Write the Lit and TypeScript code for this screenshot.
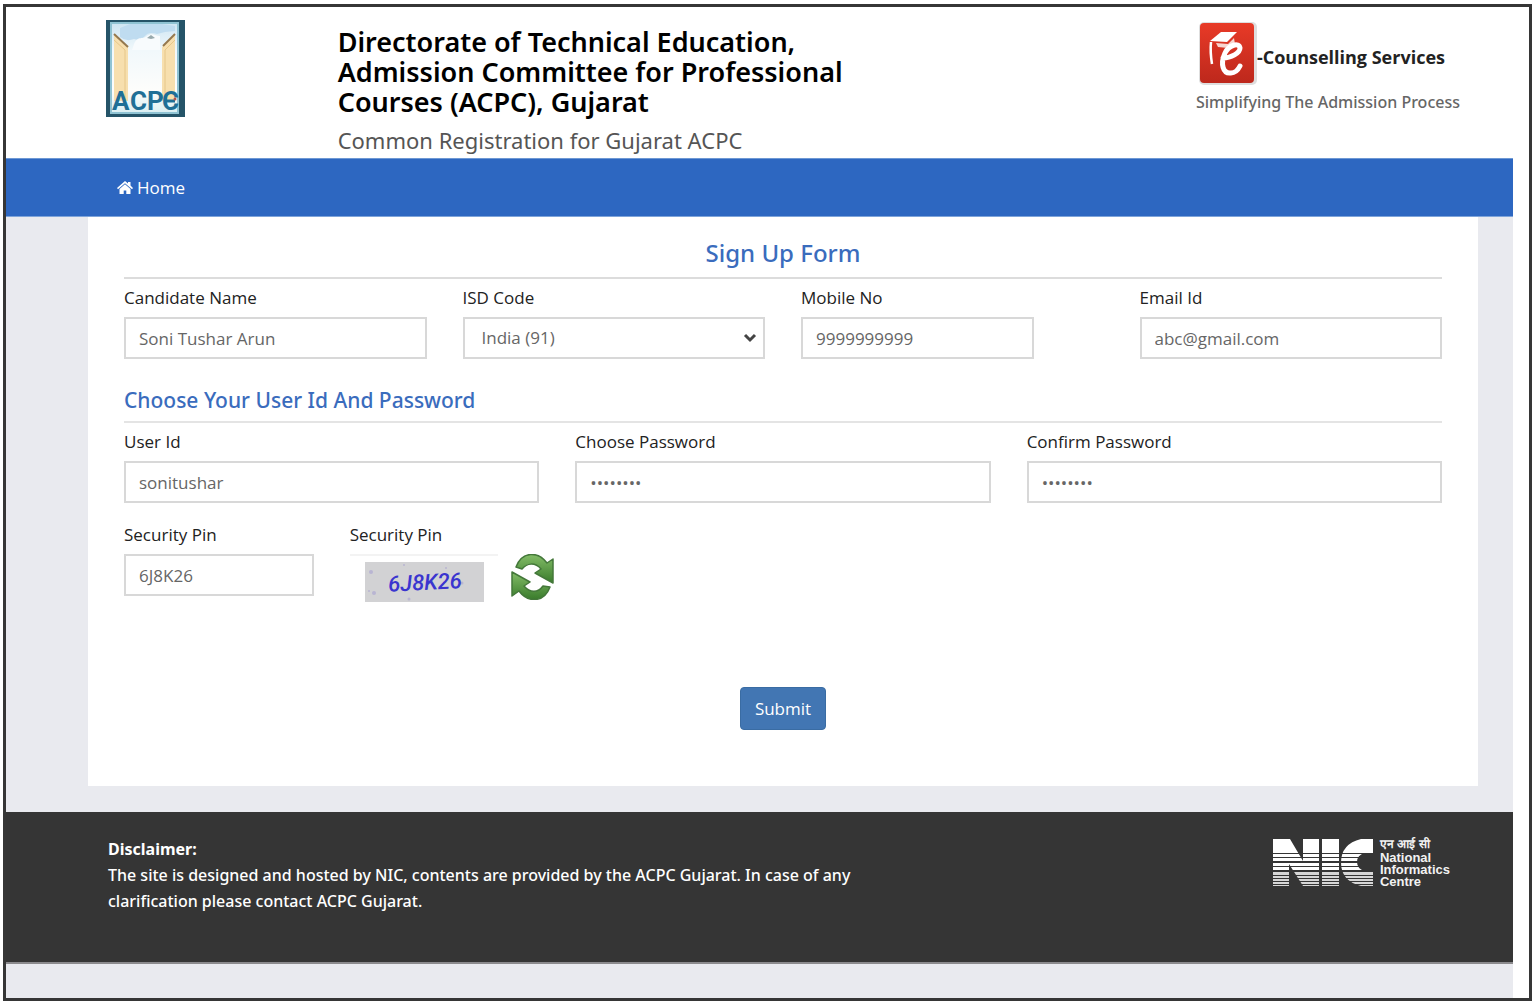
import { LitElement, html, css, svg } from "lit";
import { customElement } from "lit/decorators.js";

@customElement("acpc-logo")
class AcpcLogo extends LitElement {
  static styles = css`
    :host { display: block; }
    .art { display: block; width: 80px; height: 97px; }
    .name { font: 700 26px "Roboto", sans-serif; fill: #1f6f96; }
  `;
  render() {
    return html`<svg class="art" viewBox="0 0 80 97" role="img" aria-label="ACPC">
      <defs>
        <linearGradient id="sky" x1="0" y1="0" x2="0" y2="1">
          <stop offset="0" stop-color="#cfe6f3" />
          <stop offset=".3" stop-color="#f1f8fb" />
          <stop offset=".75" stop-color="#fdfdfb" />
          <stop offset="1" stop-color="#dcf0f3" />
        </linearGradient>
      </defs>
      <rect width="79" height="97" fill="#255468" />
      <rect x="4" y="2" width="69" height="92" fill="#8fc3d3" />
      <rect x="6" y="4" width="65" height="88" fill="url(#sky)" />
      <path d="M14 8l10-4h32l13 2v5l-10 1-8 2q-8-3-12 2t-11 3q-8 3-14-2z" fill="#bfdcf0" />
      <path d="M28 24c4-9 9-4 13-8 5-4 9 0 13 0v14H26z" fill="#f8fbfd" />
      <path d="M41 18l4-3 4 3-4 1z" fill="#98a9ad" />
      <path d="M8 14l14 13v54H8z" fill="#f7dfae" />
      <path d="M8 20l11 10v50" fill="none" stroke="#e6c78a" stroke-width="1" />
      <path d="M8 14l14 13" stroke="#94784e" stroke-width="2" />
      <path d="M69 14L56 27v54h13z" fill="#f7dfae" />
      <path d="M69 20L59 30v50" fill="none" stroke="#e6c78a" stroke-width="1" />
      <path d="M69 14L57 26" stroke="#94784e" stroke-width="2" />
      <text class="name" y="90"><tspan x="6">A</tspan><tspan x="24">C</tspan><tspan x="41">P</tspan><tspan x="56">C</tspan></text>
      <path d="M60 81h9" stroke="#1f6f96" stroke-width="3" />
      <circle cx="69" cy="79" r="1.5" fill="#b45349" />
    </svg>`;
  }
}

@customElement("counselling-logo")
class CounsellingLogo extends LitElement {
  static styles = css`
    :host { display: block; }
    .brand { display: flex; align-items: center; padding-left: 3px; }
    .tile { width: 58px; height: 64px; flex: none; }
    .name { font: 700 18px/24px "Open Sans", sans-serif; color: #222; padding-top: 6px; white-space: nowrap; }
    .tag { margin: 4px 0 0; font: 500 16px/24px "Noto Sans", sans-serif; color: #666; white-space: nowrap; }
  `;
  render() {
    return html`<div class="brand">
        <svg class="tile" viewBox="0 0 58 64" aria-hidden="true">
          <defs>
            <linearGradient id="red" x1="0" y1="0" x2="0" y2="1">
              <stop offset="0" stop-color="#e83a27" />
              <stop offset="1" stop-color="#bd281c" />
            </linearGradient>
          </defs>
          <rect x="0" y="0" width="58" height="63" rx="5" fill="#dedede" />
          <rect x="1" y="1" width="54" height="60" rx="4" fill="url(#red)" />
          <path d="M11 19l11-9 16 0-10 10z" fill="#fff" />
          <path d="M17 21l12 1 6-6 1 6-7 4-10-1z" fill="#f7d5cf" />
          <path d="M12 20q-1 10 1 22" fill="none" stroke="#fff" stroke-width="2.500" />
          <path d="M24 36c8 0 17-5 17-10-1-6-11-3-15 5-5 11-2 21 6 20 5 0 7-3 9-7" fill="none" stroke="#fff" stroke-width="5" stroke-linecap="round" />
        </svg>
        <span class="name">-Counselling Services</span>
      </div>
      <p class="tag">Simplifying The Admission Process</p>`;
  }
}

@customElement("nic-logo")
class NicLogo extends LitElement {
  static styles = css`
    :host { display: flex; gap: 7px; color: #f2f2f2; }
    .mark { width: 100px; height: 48px; margin-top: 3px; }
    .words { font: 700 13px/12px "Liberation Sans", sans-serif; }
    .words span { display: block; white-space: nowrap; }
    .words .hindi { font-size: 12px; line-height: 16px; }
  `;
  render() {
    const gaps = [
      [14, 1], [18, 1], [22, 2], [27, 1], [31, 2], [36, 1], [39, 1], [42, 1], [45, 1],
    ];
    return html`<svg class="mark" viewBox="0 0 100 48" aria-hidden="true">
        <path d="M0 0h17l13 22V0h16v47H30L16 25v22H0zM49 0h17v47H49zM100 0v14H92q-8 2-8 9t8 9h8v15H88Q68 42 68 23.500T88 0z" fill="#fff" />
        <rect y="31" width="100" height="17" fill="#353535" opacity=".2" />
        ${gaps.map(([y, h]) => svg`<rect x="0" y=${y} width="100" height=${h} fill="#353535" />`)}
      </svg>
      <div class="words">
        <span class="hindi" lang="hi">एन आई सी</span>
        <span>National</span><span>Informatics</span><span>Centre</span>
      </div>`;
  }
}

@customElement("app-root")
class AppRoot extends LitElement {
  static styles = css`
    :host {
      display: flex;
      box-sizing: border-box;
      min-height: 100vh;
      padding: 4px 4px 3px 3px;
      background: #fff;
      color: #222;
      font: 17px/24px "Open Sans", "Noto Sans", sans-serif;
    }
    * { box-sizing: border-box; }
    .frame { flex: 1; display: flex; flex-direction: column; border: 3px solid #363636; padding-right: 16px; min-width: 0; }
    .wrap { margin: 0 35px 0 82px; }
    .header { display: grid; grid-template-columns: repeat(12, 1fr); min-height: 151px; }
    .logo { grid-column: span 2; padding: 13px 18px 0; }
    .heading { grid-column: span 5; padding: 20px 18px 0; }
    .org { margin: 0; font: 600 27px/30px "Noto Sans", sans-serif; color: #000; }
    .sub { margin: 8px 0 0; font: 400 22px/30px "Noto Sans", sans-serif; color: #555; }
    .services { grid-column: span 5; display: flex; justify-content: flex-end; align-items: flex-start; padding: 15px 18px 0; }
    .nav { background: #2d67c1; border-top: 1px solid #6d98d4; border-bottom: 1px solid #7ea4da; }
    .nav .wrap { padding: 0 29px; }
    .home { display: inline-flex; align-items: center; gap: 4px; height: 57px; color: #fff; font-size: 17px; text-decoration: none; vertical-align: top; }
    .home svg { width: 16px; height: 13px; }
    .body { flex: 1; display: flex; flex-direction: column; background: #e9eaef; }
    .card { background: #fff; padding: 16px 36px 56px; }
    .title { margin: 0; padding-bottom: 4px; border-bottom: 2px solid #dcdcdc; text-align: center; font: 500 24px/40px "Noto Sans", sans-serif; color: #3a6cbd; }
    .section { margin: 24px 0 0; padding-bottom: 4px; border-bottom: 2px solid #e4e4e4; font: 500 21px/34px "Noto Sans", sans-serif; color: #3a6cbd; }
    .row { display: grid; column-gap: 36px; padding-top: 7px; }
    .four { grid-template-columns: repeat(4, 1fr); }
    .three { grid-template-columns: repeat(3, 1fr); }
    .six { grid-template-columns: repeat(6, 1fr); padding-top: 20px; }
    .label { display: block; margin-bottom: 7px; font: 500 17px/24px "Open Sans", sans-serif; color: #222; }
    .box { display: block; width: 100%; height: 42px; margin: 0; padding: 0 13px; border: 2px solid #d8d8d8; border-radius: 0; background: #fff; color: #666; font: 17px/24px "Open Sans", sans-serif; outline: none; appearance: none; }
    .short { width: 77%; }
    .select { position: relative; }
    .select .box { padding-left: 17px; }
    .chevron { position: absolute; right: 7px; top: 15px; width: 16px; height: 12px; pointer-events: none; }
    .pin { grid-column: span 2; }
    .captcha { display: flex; align-items: flex-start; gap: 13px; }
    .image { display: block; width: 148px; height: 48px; }
    .digits { font: italic 500 22px "Roboto", sans-serif; fill: #3a35cf; }
    .refresh { width: 44px; height: 46px; padding: 0; border: 0; background: none; }
    .refresh svg { display: block; width: 44px; height: 46px; }
    .actions { display: flex; justify-content: center; padding-top: 85px; }
    .submit { height: 43px; padding: 0 14px; border: 1px solid #3a6ca3; border-radius: 4px; background: #4276b3; color: #fff; font: 17px/24px "Open Sans", sans-serif; }
    .footer { margin-top: 26px; min-height: 152px; background: #353535; border-bottom: 2px solid #8b8a8d; color: #fff; }
    .footer .wrap { display: flex; justify-content: space-between; padding: 24px 28px 0 20px; }
    .note { margin: 0; max-width: 780px; font: 500 16px/26px "Noto Sans", sans-serif; }
    .note b { display: block; }
  `;

  render() {
    return html`<div class="frame">
      <header class="wrap header">
        <div class="logo"><acpc-logo></acpc-logo></div>
        <div class="heading">
          <h1 class="org">Directorate of Technical Education, Admission Committee for Professional Courses (ACPC), Gujarat</h1>
          <p class="sub">Common Registration for Gujarat ACPC</p>
        </div>
        <div class="services"><counselling-logo></counselling-logo></div>
      </header>
      <nav class="nav"><div class="wrap">
        <a class="home" href="#">
          <svg viewBox="0 0 16 13" aria-hidden="true"><path d="M8 0l3 2.500V1h2.500v3.500L16 7l-1 1.200L8 2.300 1 8.200 0 7zM8 3.200L13.500 8v5H9.300V9.500H6.700V13H2.500V8z" fill="#fff" /></svg>
          Home</a>
      </div></nav>
      <div class="body">
        <main class="wrap card">
          <form @submit=${(e: Event) => e.preventDefault()}>
            <h2 class="title">Sign Up Form</h2>
            <div class="row four">
              <div><label class="label" for="name">Candidate Name</label><input class="box" id="name" value="Soni Tushar Arun"></div>
              <div><label class="label" for="isd">ISD Code</label>
                <div class="select">
                  <select class="box" id="isd"><option>India (91)</option></select>
                  <svg class="chevron" viewBox="0 0 16 12" aria-hidden="true"><path d="M3 3l5 5 5-5" fill="none" stroke="#444" stroke-width="3" /></svg>
                </div>
              </div>
              <div><label class="label" for="mobile">Mobile No</label><input class="box short" id="mobile" type="tel" value="9999999999"></div>
              <div><label class="label" for="email">Email Id</label><input class="box" id="email" type="email" value="abc@gmail.com"></div>
            </div>
            <h3 class="section">Choose Your User Id And Password</h3>
            <div class="row three">
              <div><label class="label" for="user">User Id</label><input class="box" id="user" value="sonitushar"></div>
              <div><label class="label" for="pass">Choose Password</label><input class="box" id="pass" type="password" value="password"></div>
              <div><label class="label" for="confirm">Confirm Password</label><input class="box" id="confirm" type="password" value="password"></div>
            </div>
            <div class="row six">
              <div><label class="label" for="pin">Security Pin</label><input class="box" id="pin" value="6J8K26"></div>
              <div class="pin">
                <span class="label">Security Pin</span>
                <div class="captcha">
                  <svg class="image" viewBox="0 0 148 48" role="img" aria-label="6J8K26">
                    <rect width="148" height="2" fill="#f3f3f3" />
                    <rect x="15" y="8" width="119" height="40" fill="#d2d2d4" />
                    <g fill="#b9b5d2"><circle cx="21" cy="18" r="2" /><circle cx="24" cy="39" r="2" /><circle cx="19" cy="37" r="1" /><circle cx="54" cy="11" r="1" /><circle cx="112" cy="29" r="1.500" /><circle cx="59" cy="45" r="1.500" /><circle cx="96" cy="14" r="1" /></g>
                    <text class="digits" x="38" y="36" transform="rotate(-3 74 28)">6J8K26</text>
                  </svg>
                  <button class="refresh" type="button" aria-label="Refresh">
                    <svg viewBox="0 0 44 46" aria-hidden="true">
                      <defs><linearGradient id="leaf" x1="0" y1="0" x2="0" y2="1"><stop offset="0" stop-color="#84bd68" /><stop offset="1" stop-color="#397b2b" /></linearGradient></defs>
                      <g fill="url(#leaf)" stroke="#44783a" stroke-width="1.500" stroke-linejoin="round">
                        <path d="M5 13C11-3 27-3 36 9l6-4v24L24 19l6-4C24 8 16 9 11 15z" />
                        <path d="M39 33C33 49 17 49 8 37l-7 5V18l18 10-6 4c6 7 14 7 19 0z" />
                      </g>
                    </svg>
                  </button>
                </div>
              </div>
            </div>
            <div class="actions"><button class="submit" type="submit">Submit</button></div>
          </form>
        </main>
        <footer class="footer"><div class="wrap">
          <p class="note"><b>Disclaimer:</b>The site is designed and hosted by NIC, contents are provided by the ACPC Gujarat. In case of any clarification please contact ACPC Gujarat.</p>
          <nic-logo></nic-logo>
        </div></footer>
      </div>
    </div>`;
  }
}
